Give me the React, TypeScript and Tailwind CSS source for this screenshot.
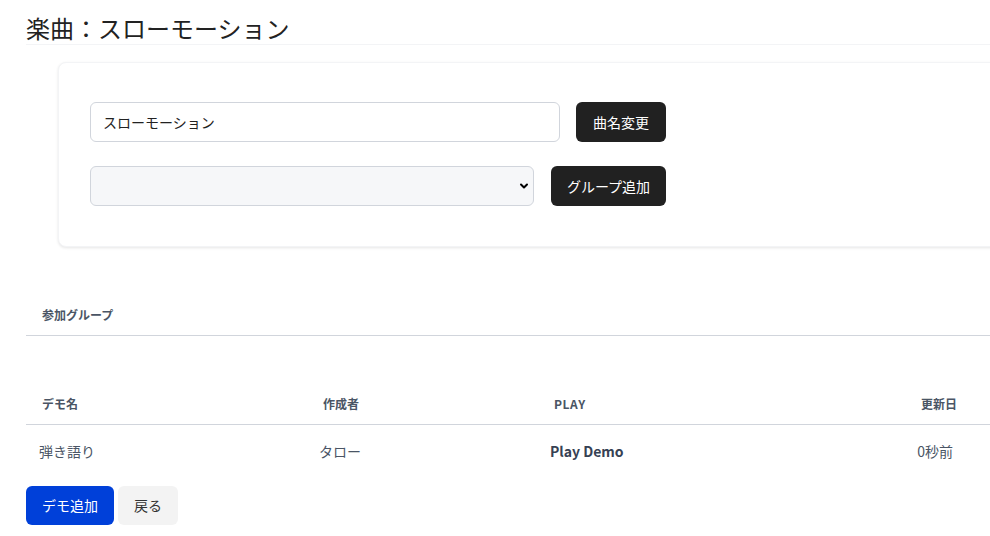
import { ChevronDown } from 'lucide-react';

const font = { fontFamily: '"Noto Sans CJK JP", "Noto Sans", sans-serif' };

export default function App() {
  return (
    <div className="h-[536px] w-[990px] overflow-hidden bg-white text-[#212529]" style={font}>
      <div className="w-[1100px] pl-[26px]">
        <h1 className="border-b border-gray-100 pt-[12px] text-[24px] leading-[32px] text-[#222]">
          楽曲：スローモーション
        </h1>

        <div className="ml-[32px] mt-[17px] flex flex-col gap-[24px] rounded-lg border border-gray-100 bg-white pl-[31px] pt-[39px] pb-[40px] shadow-[0_1px_3px_rgba(0,0,0,0.1)]">
          <div className="flex items-center gap-[16px]">
            <input
              defaultValue="スローモーション"
              className="h-[40px] w-[470px] rounded-md border border-gray-300 bg-white px-[12px] text-[14px] text-[#222] outline-none"
              style={font}
            />
            <button className="h-[40px] w-[90px] rounded-md bg-[#212121] text-[14px] text-white">曲名変更</button>
          </div>
          <div className="flex items-center gap-[17px]">
            <div className="relative h-[40px] w-[444px]">
              <select className="h-full w-full appearance-none rounded-md border border-gray-300 bg-[#f6f7f9] px-[12px]" />
              <ChevronDown
                className="pointer-events-none absolute right-[4px] top-[14px] h-[12px] w-[12px] text-black"
                strokeWidth={4}
              />
            </div>
            <button className="h-[40px] w-[115px] rounded-md bg-[#212121] text-[14px] text-white">グループ追加</button>
          </div>
        </div>

        <table className="mt-[48px] w-full text-left">
          <thead>
            <tr className="border-b border-gray-300">
              <th className="px-[16px] py-[12px] text-[12px] leading-[16px] font-bold text-gray-600">参加グループ</th>
            </tr>
          </thead>
        </table>

        <table className="mt-[48px] w-full table-fixed text-left">
          <colgroup>
            <col className="w-[281px]" />
            <col className="w-[231px]" />
            <col className="w-[300px]" />
            <col className="w-[135px]" />
            <col />
          </colgroup>
          <thead>
            <tr className="border-b border-gray-300">
              <th className="px-[16px] py-[12px] text-[12px] leading-[16px] font-bold text-gray-600">デモ名</th>
              <th className="px-[16px] py-[12px] text-[12px] leading-[16px] font-bold text-gray-600">作成者</th>
              <th className="px-[16px] py-[12px] text-[12px] leading-[16px] font-bold tracking-wider text-gray-600 uppercase">Play</th>
              <th className="px-[16px] py-[12px] text-right text-[12px] leading-[16px] font-bold text-gray-600">更新日</th>
              <th />
            </tr>
          </thead>
          <tbody>
            <tr>
              <td className="px-[13px] py-[16px] text-[14px] leading-[20px] text-gray-600">弾き語り</td>
              <td className="px-[12px] py-[16px] text-[14px] leading-[20px] text-gray-600">タロー</td>
              <td className="px-[12px] py-[16px] text-[14px] leading-[20px] font-bold text-gray-700">Play Demo</td>
              <td className="px-[20px] py-[16px] text-right text-[14px] leading-[20px] text-gray-600">0秒前</td>
              <td />
            </tr>
          </tbody>
        </table>

        <div className="mt-[9px] flex gap-[4px]">
          <button className="h-[39px] w-[88px] rounded-md bg-[#0040d9] text-[14px] text-white">デモ追加</button>
          <button className="h-[39px] w-[60px] rounded-md bg-[#f3f3f3] text-[14px] text-[#333]">戻る</button>
        </div>
      </div>
    </div>
  );
}
